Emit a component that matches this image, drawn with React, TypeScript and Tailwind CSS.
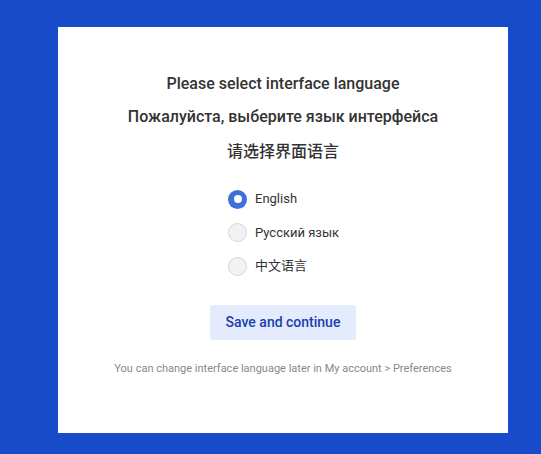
import React, { useState } from 'react';

const languages = [
    { id: 'en', label: 'English' },
    { id: 'ru', label: 'Русский язык' },
    { id: 'zh', label: '中文语言' },
];

const App: React.FC = () => {
    const [selected, setSelected] = useState('en');

    return (
        <div
            className="w-[541px] h-[454px] bg-[#174bc9] pt-[27px] pl-[58px]"
            style={{ fontFamily: 'Roboto, "Noto Sans CJK SC", sans-serif' }}
        >
            <div className="w-[450px] h-[406px] bg-white flex flex-col items-center pt-[47px]">
                <div className="flex flex-col items-center gap-[13px] text-[16px] font-medium text-[#333] leading-[20px]">
                    <h1>Please select interface language</h1>
                    <h1>Пожалуйста, выберите язык интерфейса</h1>
                    <h1 className="mt-[2px]">请选择界面语言</h1>
                </div>
                <div className="flex flex-col gap-[13.5px] mt-[27px] w-[112px] ml-[2px]">
                    {languages.map(lang => (
                        <label
                            key={lang.id}
                            onClick={() => setSelected(lang.id)}
                            className="flex items-center gap-[8px] cursor-pointer text-[13px] text-[#333] leading-[20px]"
                        >
                            {selected === lang.id ? (
                                <span className="w-[19px] h-[19px] rounded-full bg-[#3f6fd8] flex items-center justify-center">
                                    <span className="w-[8px] h-[8px] rounded-full bg-white" />
                                </span>
                            ) : (
                                <span className="w-[19px] h-[19px] rounded-full bg-[#f2f2f2] border border-[#d6d6d6]" />
                            )}
                            <span>{lang.label}</span>
                        </label>
                    ))}
                </div>
                <button className="mt-[29px] w-[146px] h-[35px] rounded-[3px] bg-[#e3ebfc] text-[#1b3fae] text-[14px] font-medium">
                    Save and continue
                </button>
                <p className="mt-[22px] text-[11px] text-[#888] leading-[14px]">
                    You can change interface language later in My account &gt; Preferences
                </p>
            </div>
        </div>
    );
};

export default App;
